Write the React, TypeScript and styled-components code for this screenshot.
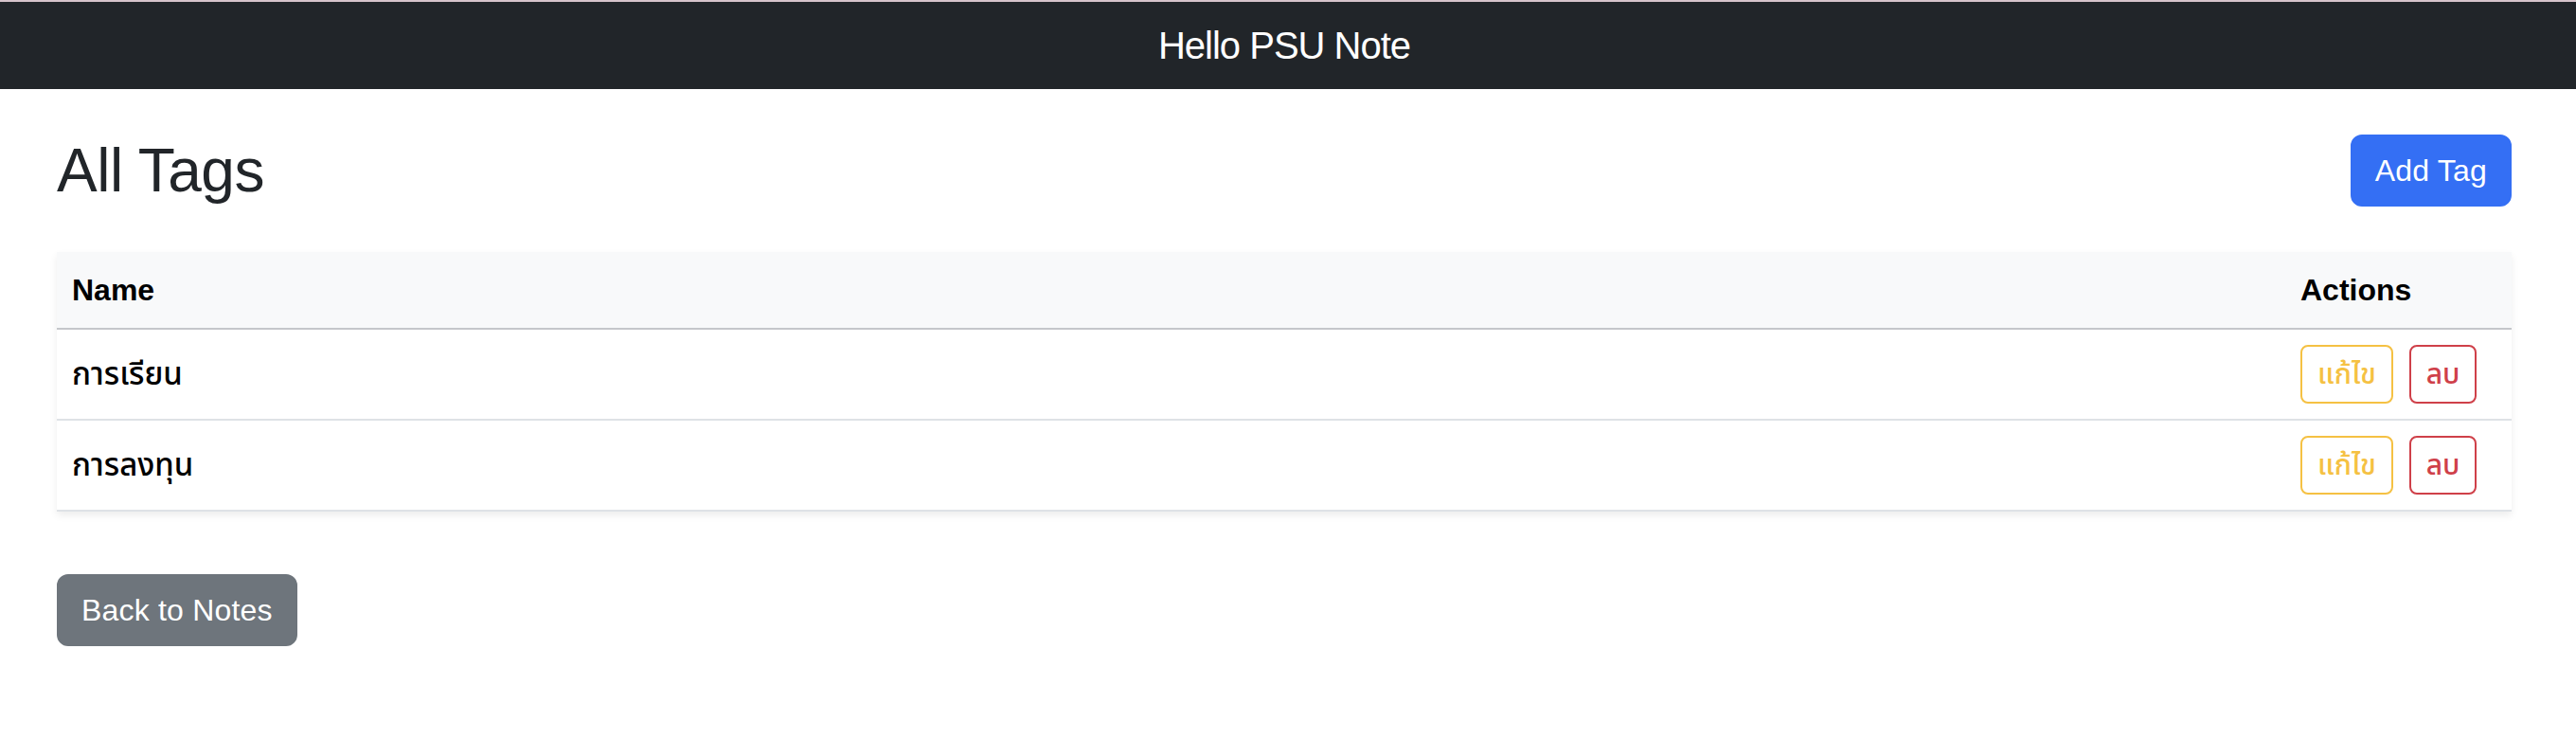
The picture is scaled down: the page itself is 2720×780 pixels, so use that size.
import React from "react";
import styled, { createGlobalStyle, css } from "styled-components";

const GlobalStyle = createGlobalStyle`
  html, body {
    margin: 0;
    padding: 0;
    background: #ffffff;
  }
  body {
    font-family: "Liberation Sans", "Noto Sans Thai", "Loma", "Garuda", "Noto Sans", sans-serif;
    color: #212529;
  }
  * { box-sizing: border-box; }
`;

const TopStrip = styled.div`
  height: 2px;
  background: #d6c4cb;
`;

const Navbar = styled.nav`
  height: 92px;
  background: #212529;
  display: flex;
  align-items: center;
  justify-content: center;
  padding: 0 68px 0 60px;
`;

const Brand = styled.span`
  color: #ffffff;
  font-size: 40px;
  line-height: 60px;
  letter-spacing: -1px;
`;

const Container = styled.main`
  padding: 48px 68px 0 60px;
`;

const TitleRow = styled.div`
  display: flex;
  align-items: center;
  justify-content: space-between;
  margin-bottom: 48px;
`;

const Title = styled.h2`
  margin: 0;
  font-size: 64px;
  font-weight: 500;
  line-height: 76px;
  letter-spacing: -0.5px;
  color: #212529;
`;

type Variant = "primary" | "secondary" | "warning" | "danger";

const solid: Record<string, string> = {
  primary: "#346ff4",
  secondary: "#6e757c",
};
const outline: Record<string, string> = {
  warning: "#f5c143",
  danger: "#cf4049",
};

const Button = styled.button<{ $variant: Variant; $small?: boolean }>`
  font-family: inherit;
  border-style: solid;
  border-width: 2px;
  cursor: pointer;
  display: inline-block;
  ${({ $small }) =>
    $small
      ? css`
          font-size: 30px;
          font-weight: 500;
          line-height: 42px;
          padding: 8px 16px;
          border-radius: 8px;
        `
      : css`
          font-size: 32px;
          line-height: 48px;
          letter-spacing: 0.2px;
          padding: 12px 24px;
          border-radius: 12px;
        `}
  ${({ $variant }) =>
    solid[$variant]
      ? css`
          background: ${solid[$variant]};
          border-color: ${solid[$variant]};
          color: #ffffff;
        `
      : css`
          background: transparent;
          border-color: ${outline[$variant]};
          color: ${outline[$variant]};
        `}
`;

const Table = styled.table`
  width: 100%;
  border-collapse: collapse;
  box-shadow: 0 4px 8px rgba(0, 0, 0, 0.075);
`;

const Th = styled.th<{ $actions?: boolean }>`
  background: #f8f9fa;
  text-align: left;
  font-size: 32px;
  line-height: 48px;
  font-weight: 700;
  color: #000000;
  padding: 16px;
  border-bottom: 2px solid #c5c7ca;
  ${({ $actions }) => $actions && css`width: 239px;`}
`;

const Td = styled.td`
  font-size: 33px;
  font-weight: 500;
  line-height: 48px;
  color: #000000;
  padding: 16px;
  border-bottom: 2px solid #dee2e6;
  vertical-align: middle;
`;

const Actions = styled.div`
  display: flex;
  gap: 17px;
`;

const BackRow = styled.div`
  margin-top: 66px;
`;

const tags = ["การเรียน", "การลงทุน"];

export default function App() {
  return (
    <>
      <GlobalStyle />
      <TopStrip />
      <Navbar>
        <Brand>Hello PSU Note</Brand>
      </Navbar>
      <Container>
        <TitleRow>
          <Title>All Tags</Title>
          <Button $variant="primary">Add Tag</Button>
        </TitleRow>
        <Table>
          <thead>
            <tr>
              <Th>Name</Th>
              <Th $actions>Actions</Th>
            </tr>
          </thead>
          <tbody>
            {tags.map((t) => (
              <tr key={t}>
                <Td>{t}</Td>
                <Td>
                  <Actions>
                    <Button $variant="warning" $small>
                      แก้ไข
                    </Button>
                    <Button $variant="danger" $small>
                      ลบ
                    </Button>
                  </Actions>
                </Td>
              </tr>
            ))}
          </tbody>
        </Table>
        <BackRow>
          <Button $variant="secondary">Back to Notes</Button>
        </BackRow>
      </Container>
    </>
  );
}
